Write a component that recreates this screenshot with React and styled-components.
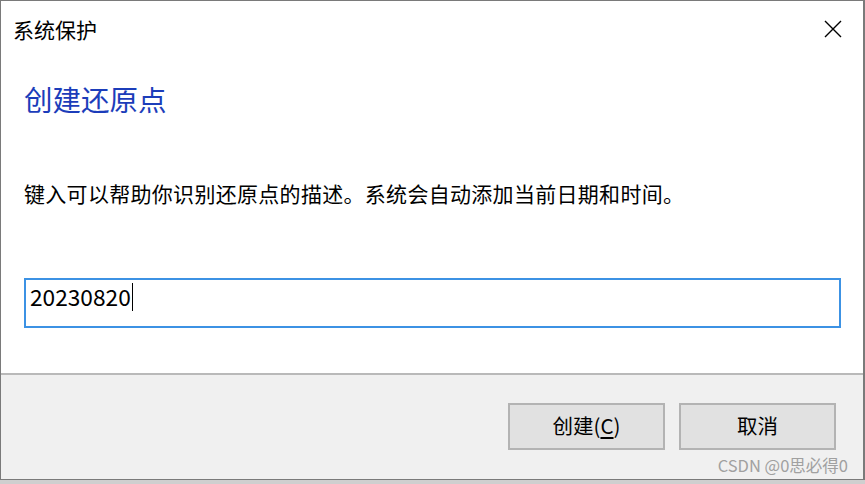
import styled, { createGlobalStyle } from "styled-components";

const GlobalStyle = createGlobalStyle`
  html, body {
    margin: 0;
    padding: 0;
    background: #cfcfcf;
  }
  body {
    font-family: "Noto Sans CJK SC", "Microsoft YaHei", "Noto Sans", sans-serif;
  }
`;

const Window = styled.div`
  position: relative;
  box-sizing: border-box;
  width: 865px;
  height: 480px;
  background: #ffffff;
  border: 1px solid #7a7a7a;
  border-right-width: 2px;
  display: flex;
  flex-direction: column;
`;

const TitleBar = styled.div`
  height: 56px;
  display: flex;
  align-items: center;
  justify-content: space-between;
  padding: 0 20px 0 12px;
`;

const Title = styled.div`
  font-size: 21px;
  line-height: 28px;
  color: #000;
`;

const CloseButton = styled.button`
  width: 20px;
  height: 20px;
  padding: 0;
  border: none;
  background: transparent;
  display: flex;
  align-items: center;
  justify-content: center;
`;

const Content = styled.div`
  flex: 1;
  padding: 0 23px;
  display: flex;
  flex-direction: column;
`;

const Heading = styled.h1`
  margin: 24px 0 0;
  font-size: 28.5px;
  line-height: 36px;
  font-weight: 400;
  color: #1c3dba;
`;

const Description = styled.p`
  margin: 62px 0 0;
  font-size: 21px;
  line-height: 28px;
  letter-spacing: 0.3px;
  color: #000;
`;

const Field = styled.div`
  margin-top: 71px;
  box-sizing: border-box;
  width: 817px;
  height: 50px;
  border: 2px solid #3c92e4;
  padding: 2px 4px 0;
  display: flex;
  align-items: flex-start;
  font-size: 22.7px;
  line-height: 30px;
  color: #000;
`;

const Caret = styled.span`
  display: inline-block;
  width: 1.5px;
  height: 28px;
  margin-top: 1px;
  margin-left: 1px;
  background: #000;
`;

const Footer = styled.div`
  height: 106px;
  box-sizing: border-box;
  border-top: 2px solid #b9b9b9;
  background: #f0f0f0;
  padding: 28px 27px 0 0;
  display: flex;
  justify-content: flex-end;
  align-items: flex-start;
  gap: 14px;
`;

const Button = styled.button`
  box-sizing: border-box;
  width: 157px;
  height: 47px;
  background: #e1e1e1;
  border: 2px solid #b3b3b3;
  font-family: inherit;
  font-size: 20.5px;
  line-height: 26px;
  color: #000;
  padding: 0 0 3px;
  u {
    text-underline-offset: 3px;
  }
`;

const Watermark = styled.div`
  position: absolute;
  right: 15px;
  bottom: 4px;
  font-size: 16.5px;
  line-height: 20px;
  color: #a0a0a0;
`;

export default function App() {
  return (
    <>
      <GlobalStyle />
      <Window>
        <TitleBar>
          <Title>系统保护</Title>
          <CloseButton aria-label="关闭">
            <svg width="18" height="18" viewBox="0 0 18 18">
              <path d="M1 1 L17 17 M17 1 L1 17" stroke="#000" strokeWidth="1.4" />
            </svg>
          </CloseButton>
        </TitleBar>
        <Content>
          <Heading>创建还原点</Heading>
          <Description>
            键入可以帮助你识别还原点的描述。系统会自动添加当前日期和时间。
          </Description>
          <Field>
            20230820
            <Caret />
          </Field>
        </Content>
        <Footer>
          <Button>
            创建(<u>C</u>)
          </Button>
          <Button>取消</Button>
        </Footer>
        <Watermark>CSDN @0思必得0</Watermark>
      </Window>
    </>
  );
}
